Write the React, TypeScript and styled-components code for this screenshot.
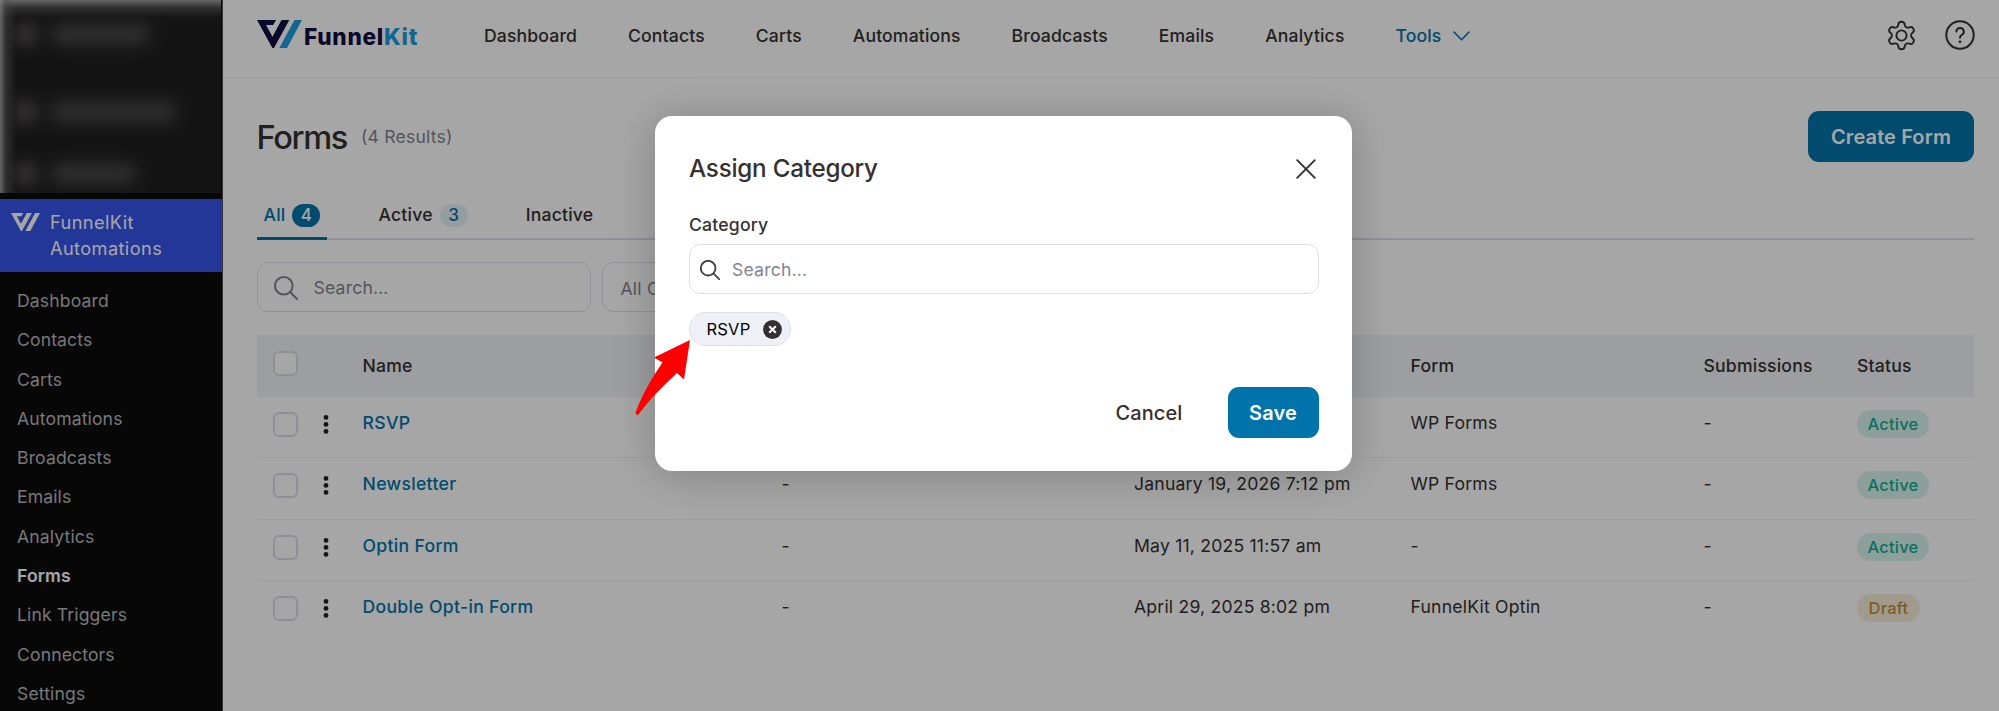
import React from "react";
import styled, { createGlobalStyle, css } from "styled-components";

const Global = createGlobalStyle`
  * { box-sizing: border-box; }
  html, body { margin: 0; height: 100%; overflow: hidden; background: #fff; }
  body { font-family: Inter, "Liberation Sans", sans-serif; color: #353030; font-size: 17.6px; line-height: 24px; letter-spacing: 0.2px; }
`;

const Page = styled.div`
  position: relative;
  display: flex;
  width: 1999px;
  height: 711px;
  overflow: hidden;
`;

const Sidebar = styled.aside`
  display: flex;
  flex-direction: column;
  width: 223px;
  flex: none;
  height: 711px;
  background: #0b0b0b;
  border-right: 1px solid #505050;
  overflow: hidden;
`;

const BlurArea = styled.div`
  height: 193px;
  width: 221px;
  flex: none;
  overflow: hidden;
  padding: 19px 0 0 14px;
  background:
    linear-gradient(to right, rgba(200, 200, 200, 0.75), rgba(120, 120, 120, 0.45) 6px, transparent 16px),
    linear-gradient(to bottom, rgba(200, 200, 200, 0.75), rgba(120, 120, 120, 0.45) 8px, transparent 18px),
    #202020;
`;

const BlurRow = styled.div<{ $top: number }>`
  display: flex;
  align-items: center;
  gap: 14px;
  height: 30px;
  margin-top: ${(p) => p.$top}px;
  filter: blur(8px);
`;
const BlurDot = styled.span`
  width: 24px;
  height: 22px;
  border-radius: 11px;
  background: #585252;
`;
const BlurBar = styled.span<{ $w: number }>`
  width: ${(p) => p.$w}px;
  height: 20px;
  border-radius: 8px;
  background: #4a4a4a;
`;

const CurrentPlugin = styled.div`
  display: flex;
  flex: none;
  height: 73px;
  margin-top: 6px;
  padding: 10px 0 0 11px;
  gap: 10px;
  background: #3655ec;
  color: #fff;
  font-size: 18.2px;
  letter-spacing: 0.4px;
  line-height: 26px;
  svg { margin-top: 4px; }
`;

const SideList = styled.nav`
  display: flex;
  flex-direction: column;
  padding: 9px 0 0 17px;
`;
const SideItem = styled.a<{ $active?: boolean }>`
  height: 39.3px;
  line-height: 39.3px;
  flex: none;
  color: ${(p) => (p.$active ? "#fff" : "#b9b9b9")};
  font-weight: ${(p) => (p.$active ? 600 : 400)};
  letter-spacing: 0.12px;
`;

const Main = styled.main`
  flex: 1;
  min-width: 0;
  display: flex;
  flex-direction: column;
`;
const TopBar = styled.header`
  display: flex;
  align-items: center;
  height: 78px;
  padding: 0 24px 7px 34px;
  border-bottom: 1px solid #eeeef2;
`;
const Brand = styled.div`
  display: flex;
  width: 227px;
  height: 31px;
  gap: 2px;
`;
const BrandName = styled.span`
  font-weight: 800;
  font-size: 22.6px;
  line-height: 33px;
  letter-spacing: 0.75px;
  color: #120d3f;
  span { color: #1c9fe0; }
`;
const TopNav = styled.nav`
  display: flex;
  flex: 1;
  gap: 51px;
  padding-top: 1px;
`;
const TopLink = styled.a<{ $active?: boolean }>`
  display: flex;
  align-items: center;
  gap: 11px;
  font-weight: 500;
  letter-spacing: 0.14px;
  color: ${(p) => (p.$active ? "#0073aa" : "#353030")};
`;
const TopIcons = styled.div`
  display: flex;
  align-items: center;
  gap: 27px;
`;

const Content = styled.section`
  padding: 33px 25px 0 33.5px;
`;
const TitleRow = styled.div`
  display: flex;
  align-items: center;
  justify-content: space-between;
  height: 51px;
`;
const TitleGroup = styled.div`
  display: flex;
  align-items: center;
  gap: 14px;
`;
const Title = styled.h1`
  margin: 0;
  font-weight: 550;
  font-size: 32.6px;
  line-height: 40px;
  letter-spacing: -1.35px;
`;
const Results = styled.span`
  color: #82838e;
`;
const Button = styled.button<{ $w: number; $ghost?: boolean }>`
  width: ${(p) => p.$w}px;
  height: 51px;
  padding: 1px 0 0;
  border: 0;
  border-radius: 11px;
  font: 500 20px/50px Inter, sans-serif;
  letter-spacing: 0.1px;
  ${(p) =>
    p.$ghost
      ? css`background: transparent; color: #353030;`
      : css`background: #0073aa; color: #fff; font-weight: 600;`}
`;

const Tabs = styled.div`
  display: flex;
  gap: 44px;
  height: 52px;
  margin-top: 26px;
  border-bottom: 2px solid #dedfea;
`;
const Tab = styled.div<{ $active?: boolean }>`
  display: flex;
  align-items: center;
  height: 52px;
  padding: 5px 7px 0;
  gap: 7px;
  font-weight: 500;
  color: ${(p) => (p.$active ? "#0073aa" : "#353030")};
  border-bottom: ${(p) => (p.$active ? "3px solid #0073aa" : "3px solid transparent")};
`;
const Count = styled.span<{ $active?: boolean }>`
  width: 28px;
  height: 23px;
  border-radius: 12px;
  text-align: center;
  line-height: 23px;
  font-size: 17px;
  background: ${(p) => (p.$active ? "#0073aa" : "#e6f1f6")};
  color: ${(p) => (p.$active ? "#fff" : "#0073aa")};
`;

const Filters = styled.div`
  display: flex;
  gap: 11px;
  margin-top: 22px;
`;
const FilterBox = styled.div<{ $w: number; $drop?: number }>`
  display: flex;
  align-items: center;
  width: ${(p) => p.$w}px;
  height: 50px;
  gap: 16px;
  padding: ${(p) => p.$drop ?? 1}px 17px 0 ${(p) => (p.$drop ? 18 : 16)}px;
  border: 1.5px solid #dedfea;
  border-radius: 11px;
  color: #82838e;
`;

const Grid = styled.div`
  display: grid;
  grid-template-columns: 106px 419px 352.5px 276.5px 293px 153.5px 1fr;
`;
const HeadRow = styled(Grid)`
  height: 62px;
  margin-top: 23px;
  background: #f1f3f8;
  font-weight: 500;
  line-height: 62px;
`;
const BodyRow = styled(Grid)`
  height: 61.4px;
  border-bottom: 1.5px solid #f0f0f6;
  line-height: 52px;
  &:last-child { border-bottom: 0; }
`;
const Controls = styled.div<{ $head?: boolean }>`
  display: flex;
  align-items: flex-start;
  gap: 25px;
  padding: ${(p) => (p.$head ? 16 : 15)}px 0 0 16.5px;
`;
const Check = styled.span`
  width: 25px;
  height: 25px;
  border: 2px solid #dcdde8;
  border-radius: 6px;
  background: #fff;
`;
const RowName = styled.a`
  font-weight: 500;
  letter-spacing: 0.32px;
  color: #0073aa;
`;
const Badge = styled.span<{ $draft?: boolean }>`
  display: block;
  width: ${(p) => (p.$draft ? 63 : 72)}px;
  height: 28px;
  margin-top: 13px;
  border-radius: 14px;
  text-align: center;
  font-weight: 500;
  font-size: 16.5px;
  line-height: 28px;
  background: ${(p) => (p.$draft ? "#f8efda" : "#d9f4ee")};
  color: ${(p) => (p.$draft ? "#bd9038" : "#0fae94")};
`;

const Overlay = styled.div`
  position: absolute;
  inset: 0;
  display: flex;
  align-items: flex-start;
  padding: 116px 0 0 655px;
  background: rgba(0, 0, 0, 0.35);
`;
const Modal = styled.div`
  width: 697px;
  height: 355px;
  padding: 32px 33.5px 0 34px;
  border-radius: 17px;
  background: #fff;
  box-shadow: 0 4px 40px rgba(0, 0, 0, 0.22);
`;
const ModalHead = styled.div`
  display: flex;
  align-items: center;
  justify-content: space-between;
  height: 42px;
  padding-right: 3px;
`;
const ModalTitle = styled.h2`
  margin: 0;
  font-weight: 550;
  font-size: 24.2px;
  line-height: 30px;
  letter-spacing: -0.22px;
`;
const Label = styled.div`
  margin-top: 22px;
  font-weight: 550;
  line-height: 25px;
`;
const ModalInput = styled.div`
  display: flex;
  align-items: center;
  height: 50px;
  gap: 12px;
  margin-top: 7px;
  padding: 1px 11px 0 10px;
  border: 1.5px solid #dedfea;
  border-radius: 11px;
  color: #82838e;
`;
const Chip = styled.div`
  display: flex;
  align-items: center;
  justify-content: space-between;
  width: 102px;
  height: 34px;
  margin-top: 18px;
  padding: 0 8px 0 16.5px;
  border: 1.5px solid #dedfea;
  border-radius: 17px;
  background: #f0f0f9;
  color: #000;
  font-size: 16.5px;
`;
const Actions = styled.div`
  display: flex;
  justify-content: flex-end;
  gap: 22.5px;
  margin-top: 41px;
`;
const Pointer = styled.svg`
  position: absolute;
  left: 630px;
  top: 336px;
`;

const SearchIcon = ({ size, color, w }: { size: number; color: string; w: number }) => (
  <svg width={size} height={size} viewBox="0 0 24 24" fill="none" stroke={color} strokeWidth={w} strokeLinecap="round">
    <circle cx="9.8" cy="9.8" r="8.8" />
    <path d="M16.3 16.3 L23 23" />
  </svg>
);

const Mark = ({ w, h, dark, light }: { w: number; h: number; dark: string; light: string }) => (
  <svg width={w} height={h} viewBox="0 0 45 28" preserveAspectRatio="none">
    <path fill={dark} d="M0 0 H19 L16.2 5 H9 L15.5 16.8 L24.5 0 H32.3 L17 28 H15.4 Z" />
    <path fill={light} d="M37.5 0 H45 L30 28 H22.3 Z" />
  </svg>
);

const Dots = () => (
  <svg width="6" height="25" viewBox="0 0 6 25" fill="#252020">
    <circle cx="3" cy="5.4" r="2.4" />
    <circle cx="3" cy="12.4" r="2.4" />
    <circle cx="3" cy="19.4" r="2.4" />
  </svg>
);

const sideItems = ["Dashboard", "Contacts", "Carts", "Automations", "Broadcasts", "Emails", "Analytics", "Forms", "Link Triggers", "Connectors", "Settings"];
const topItems = ["Dashboard", "Contacts", "Carts", "Automations", "Broadcasts", "Emails", "Analytics"];
const rows = [
  { name: "RSVP", date: "", form: "WP Forms", status: "Active" },
  { name: "Newsletter", date: "January 19, 2026 7:12 pm", form: "WP Forms", status: "Active" },
  { name: "Optin Form", date: "May 11, 2025 11:57 am", form: "-", status: "Active" },
  { name: "Double Opt-in Form", date: "April 29, 2025 8:02 pm", form: "FunnelKit Optin", status: "Draft" },
];

export default function App() {
  return (
    <Page>
      <Global />
      <Sidebar>
        <BlurArea>
          <BlurRow $top={0}><BlurDot /><BlurBar $w={98} /></BlurRow>
          <BlurRow $top={48}><BlurDot /><BlurBar $w={124} /></BlurRow>
          <BlurRow $top={32}><BlurDot /><BlurBar $w={84} /></BlurRow>
        </BlurArea>
        <CurrentPlugin>
          <Mark w={29} h={18} dark="#fff" light="#fff" />
          <span>FunnelKit<br />Automations</span>
        </CurrentPlugin>
        <SideList>
          {sideItems.map((t) => <SideItem key={t} $active={t === "Forms"}>{t}</SideItem>)}
        </SideList>
      </Sidebar>
      <Main>
        <TopBar>
          <Brand>
            <Mark w={45} h={28} dark="#120d3f" light="#1c9fe0" />
            <BrandName>Funnel<span>Kit</span></BrandName>
          </Brand>
          <TopNav>
            {topItems.map((t) => <TopLink key={t}>{t}</TopLink>)}
            <TopLink $active>
              Tools
              <svg width="17" height="10" viewBox="0 0 17 10" fill="none" stroke="#0073aa" strokeWidth="1.6" strokeLinecap="round" strokeLinejoin="round"><path d="M1 1 L8.5 8.8 L16 1" /></svg>
            </TopLink>
          </TopNav>
          <TopIcons>
            <svg width="33" height="33" viewBox="0 0 24 24" fill="none" stroke="#353030" strokeWidth="1.35" strokeLinejoin="round">
              <path d="M9.67 4.14a2.34 2.34 0 0 1 4.66 0 2.34 2.34 0 0 0 3.32 1.91 2.34 2.34 0 0 1 2.33 4.03 2.34 2.34 0 0 0 0 3.83 2.34 2.34 0 0 1-2.33 4.03 2.34 2.34 0 0 0-3.32 1.92 2.34 2.34 0 0 1-4.66 0 2.34 2.34 0 0 0-3.32-1.92 2.34 2.34 0 0 1-2.33-4.03 2.34 2.34 0 0 0 0-3.83A2.34 2.34 0 0 1 6.35 6.05a2.34 2.34 0 0 0 3.32-1.91" />
              <circle cx="12" cy="12" r="3.7" />
            </svg>
            <svg width="30" height="30" viewBox="0 0 30 30" fill="none" stroke="#353030" strokeWidth="2" strokeLinecap="round">
              <circle cx="15" cy="15" r="13.7" />
              <path d="M11.4 11.6 a3.7 3.7 0 1 1 5.4 3.3 c-1.3 .7 -1.8 1.4 -1.8 2.9" />
              <circle cx="15" cy="21.8" r="1.4" fill="#353030" stroke="none" />
            </svg>
          </TopIcons>
        </TopBar>
        <Content>
          <TitleRow>
            <TitleGroup><Title>Forms</Title><Results>(4 Results)</Results></TitleGroup>
            <Button $w={166}>Create Form</Button>
          </TitleRow>
          <Tabs>
            <Tab $active>All<Count $active>4</Count></Tab>
            <Tab>Active<Count>3</Count></Tab>
            <Tab>Inactive</Tab>
          </Tabs>
          <Filters>
            <FilterBox $w={334}><SearchIcon size={24} color="#82838e" w={2} />Search…</FilterBox>
            <FilterBox $w={230} $drop={4}>All Categories</FilterBox>
          </Filters>
          <HeadRow>
            <Controls $head><Check /></Controls>
            <span>Name</span><span /><span /><span>Form</span><span>Submissions</span><span>Status</span>
          </HeadRow>
          {rows.map((r) => (
            <BodyRow key={r.name}>
              <Controls><Check /><Dots /></Controls>
              <RowName>{r.name}</RowName>
              <span>{r.date && "-"}</span><span>{r.date}</span><span>{r.form}</span><span>-</span>
              <Badge $draft={r.status === "Draft"}>{r.status}</Badge>
            </BodyRow>
          ))}
        </Content>
      </Main>
      <Overlay>
        <Modal>
          <ModalHead>
            <ModalTitle>Assign Category</ModalTitle>
            <svg width="20" height="20" viewBox="0 0 20 20" stroke="#353030" strokeWidth="1.9" strokeLinecap="round"><path d="M1.2 1.2 L18.8 18.8 M18.8 1.2 L1.2 18.8" /></svg>
          </ModalHead>
          <Label>Category</Label>
          <ModalInput><SearchIcon size={20} color="#454040" w={2.2} />Search...</ModalInput>
          <Chip>
            RSVP
            <svg width="19" height="19" viewBox="0 0 19 19"><circle cx="9.5" cy="9.5" r="9.4" fill="#353030" /><path d="M6.2 6.2 L12.8 12.8 M12.8 6.2 L6.2 12.8" stroke="#fff" strokeWidth="2" /></svg>
          </Chip>
          <Actions><Button $w={112} $ghost>Cancel</Button><Button $w={91}>Save</Button></Actions>
        </Modal>
      </Overlay>
      <Pointer width="64" height="84" viewBox="630 336 64 84">
        <path fill="#fe0000" d="M690 340 L654 357.5 L662.5 362.5 C652 378 644 391 635.5 412.5 Q636 416 638.5 414.5 C651 398 662 387 677 373 L684 379.5 Z" />
      </Pointer>
    </Page>
  );
}
